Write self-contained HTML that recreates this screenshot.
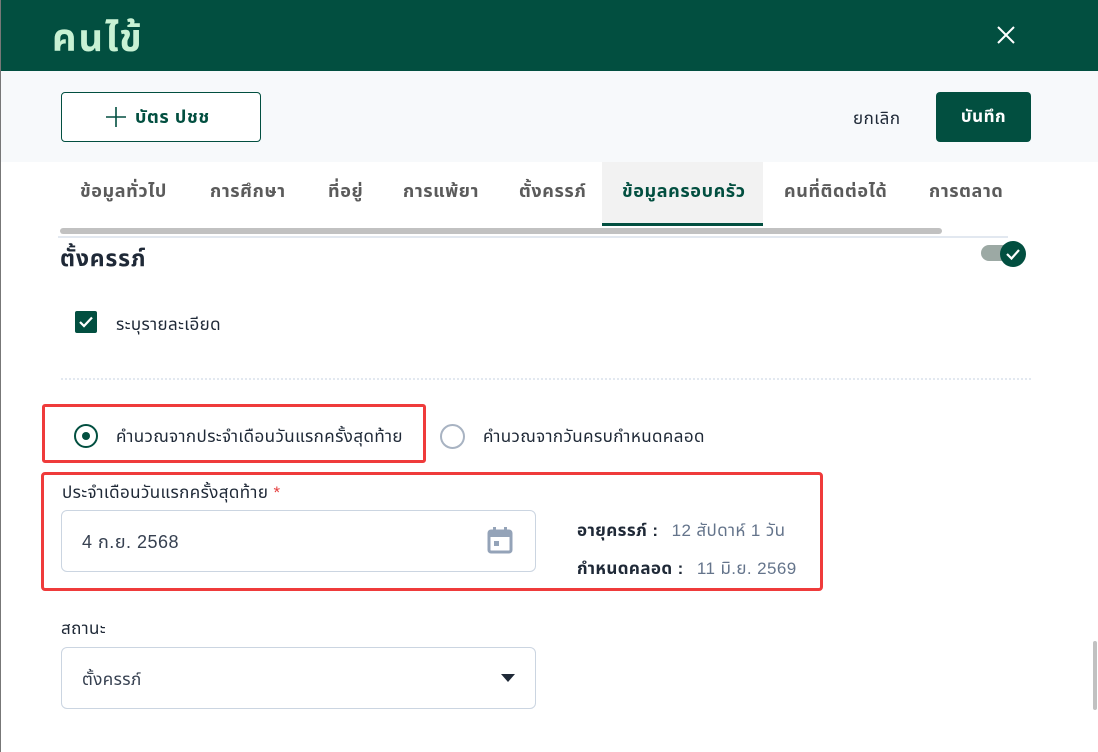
<!DOCTYPE html>
<html><head><meta charset="utf-8"><style>
*{margin:0;padding:0;box-sizing:border-box}
body{width:1098px;height:752px;overflow:hidden;background:#fff;font-family:"Liberation Sans","Noto Sans Thai","Tahoma",sans-serif;position:relative;color:#1f2937}
.a{position:absolute}
.tab{position:absolute;top:179px;font-size:18px;letter-spacing:0.6px;font-weight:bold;color:#5b5b5b}
.lbl{font-size:17px;letter-spacing:0.4px;color:#1f2937}
</style></head><body>
<div class="a" style="left:0;top:0;width:1px;height:752px;background:#777"></div>
<div class="a" style="left:1px;top:0;width:1097px;height:71px;background:#024f40"></div>
<div class="a" style="left:52px;top:12px;font-size:38px;letter-spacing:2px;font-weight:bold;color:#c8f2d4">คนไข้</div>
<svg class="a" style="left:996px;top:25px" width="20" height="20" viewBox="0 0 20 20"><path d="M2 2L18 18M18 2L2 18" stroke="#fff" stroke-width="2"/></svg>
<div class="a" style="left:1px;top:71px;width:1097px;height:91px;background:#f7f9fb"></div>
<div class="a" style="left:61px;top:92px;width:200px;height:50px;border:1.5px solid #024f40;border-radius:4px;background:#fff"></div>
<svg class="a" style="left:106px;top:107px" width="20" height="20"><path d="M10 0V20M0 10H20" stroke="#024f40" stroke-width="1.6"/></svg>
<div class="a" style="left:135px;top:105px;font-size:18px;letter-spacing:0.6px;font-weight:bold;color:#024f40">บัตร ปชช</div>
<div class="a" style="left:853px;top:106px;font-size:17px;letter-spacing:0.5px;color:#1f2937">ยกเลิก</div>
<div class="a" style="left:936px;top:92px;width:95px;height:50px;background:#024f40;border-radius:4px;color:#fff;font-size:17px;letter-spacing:0.5px;font-weight:bold;text-align:center;line-height:50px">บันทึก</div>
<div class="a" style="left:602px;top:162px;width:161px;height:64px;background:#f2f2f2;border-bottom:3px solid #024f40"></div>
<div class="tab" style="left:80px">ข้อมูลทั่วไป</div>
<div class="tab" style="left:210px">การศึกษา</div>
<div class="tab" style="left:328px">ที่อยู่</div>
<div class="tab" style="left:403px">การแพ้ยา</div>
<div class="tab" style="left:519px">ตั้งครรภ์</div>
<div class="tab" style="left:622px;color:#024f40">ข้อมูลครอบครัว</div>
<div class="tab" style="left:784px">คนที่ติดต่อได้</div>
<div class="tab" style="left:929px">การตลาด</div>
<div class="a" style="left:60px;top:228px;width:882px;height:6px;background:#c1c1c1;border-radius:3px"></div>
<div class="a" style="left:58px;top:236px;width:950px;height:2px;background:#e2e8f0"></div>
<div class="a" style="left:60px;top:243px;font-size:23px;letter-spacing:0.8px;font-weight:bold;color:#1f2937">ตั้งครรภ์</div>
<div class="a" style="left:981px;top:245px;width:36px;height:16px;border-radius:8px;background:#9ca9a4"></div>
<div class="a" style="left:1000px;top:241px;width:26px;height:26px;border-radius:50%;background:#024f40"></div>
<svg class="a" style="left:1005px;top:246px" width="16" height="16"><path d="M2 8L6.5 12.5L14 4" stroke="#fff" stroke-width="2.2" fill="none"/></svg>
<div class="a" style="left:75px;top:311px;width:22px;height:22px;border-radius:2px;background:#024f40"></div>
<svg class="a" style="left:78px;top:314px" width="16" height="16"><path d="M2 8L6 12L14 3.5" stroke="#fff" stroke-width="2.2" fill="none"/></svg>
<div class="a lbl" style="left:116px;top:312px">ระบุรายละเอียด</div>
<div class="a" style="left:61px;top:378px;width:970px;border-top:2px dotted #e2e8f0"></div>
<div class="a" style="left:42px;top:404px;width:384px;height:59px;border:3px solid #ef3b3b;border-radius:3px"></div>
<div class="a" style="left:74px;top:424px;width:24px;height:24px;border:2.5px solid #024f40;border-radius:50%"></div>
<div class="a" style="left:82px;top:432px;width:8px;height:8px;background:#024f40;border-radius:50%"></div>
<div class="a lbl" style="left:116px;top:424px">คำนวณจากประจำเดือนวันแรกครั้งสุดท้าย</div>
<div class="a" style="left:440px;top:424px;width:25px;height:25px;border:2px solid #a8b3c2;border-radius:50%"></div>
<div class="a lbl" style="left:483px;top:424px">คำนวณจากวันครบกำหนดคลอด</div>
<div class="a" style="left:41px;top:472px;width:782px;height:119px;border:3px solid #ef3b3b;border-radius:4px"></div>
<div class="a lbl" style="left:62px;top:480px">ประจำเดือนวันแรกครั้งสุดท้าย <span style="color:#e53e3e">*</span></div>
<div class="a" style="left:61px;top:510px;width:475px;height:62px;border:1px solid #cbd5e1;border-radius:6px"></div>
<div class="a" style="left:82px;top:530px;font-size:18px;letter-spacing:0.5px;color:#374151">4 ก.ย. 2568</div>
<svg class="a" style="left:487px;top:526px" width="26" height="28" viewBox="0 0 26 28"><rect x="2" y="5" width="22" height="21" rx="2" fill="none" stroke="#94a3b8" stroke-width="3"/><rect x="2" y="5" width="22" height="6" fill="#94a3b8"/><rect x="6" y="1" width="3" height="6" fill="#94a3b8"/><rect x="17" y="1" width="3" height="6" fill="#94a3b8"/><rect x="7" y="15" width="5" height="5" fill="#94a3b8"/></svg>
<div class="a lbl" style="left:577px;top:518px;font-weight:bold">อายุครรภ์ : <span style="font-weight:normal;color:#64748b;margin-left:8px">12 สัปดาห์ 1 วัน</span></div>
<div class="a lbl" style="left:577px;top:556px;font-weight:bold">กำหนดคลอด : <span style="font-weight:normal;color:#64748b;margin-left:8px">11 มิ.ย. 2569</span></div>
<div class="a lbl" style="left:61px;top:616px">สถานะ</div>
<div class="a" style="left:61px;top:647px;width:475px;height:62px;border:1px solid #cbd5e1;border-radius:6px"></div>
<div class="a" style="left:82px;top:667px;font-size:17px;letter-spacing:0.4px;color:#374151">ตั้งครรภ์</div>
<svg class="a" style="left:501px;top:674px" width="14" height="8"><path d="M0 0H14L7 8Z" fill="#1f2937"/></svg>
<div class="a" style="left:1093px;top:641px;width:4px;height:69px;background:#c1c1c1;border-radius:2px"></div>
</body></html>
